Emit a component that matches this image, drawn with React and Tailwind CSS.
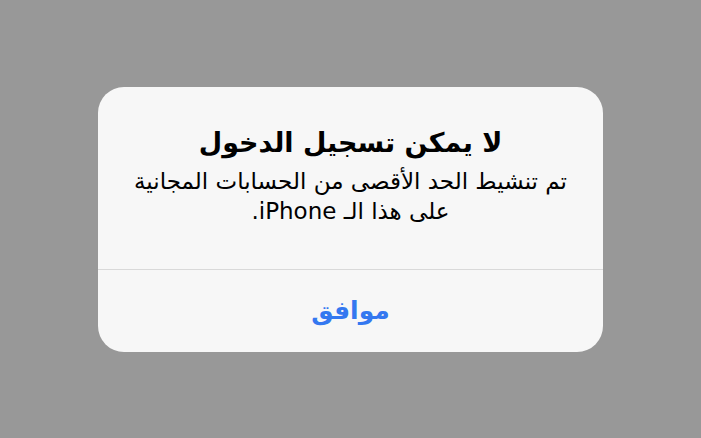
export default function App() {
    return (
        <div className="w-[701px] h-[438px] bg-[#989898] flex items-center justify-center" style={{ fontFamily: '"DejaVu Sans", "Noto Sans", sans-serif' }}>
            <div dir="rtl" className="w-[505px] h-[265px] bg-[#f7f7f7] rounded-[26px] flex flex-col overflow-hidden">
                {/* Message */}
                <div className="h-[182px] flex flex-col items-center pt-[37px] text-center text-black">
                    <div className="text-[27px] font-bold leading-[38px]">لا يمكن تسجيل الدخول</div>
                    <div className="text-[23px] leading-[30px] mt-[4px]">
                        تم تنشيط الحد الأقصى من الحسابات المجانية
                        <br />
                        على هذا الـ iPhone.
                    </div>
                </div>

                <div className="h-px bg-[#d9d9d9]" />

                {/* Button */}
                <button className="flex-1 flex items-center justify-center text-[25px] font-semibold text-[#3478f0]">
                    موافق
                </button>
            </div>
        </div>
    );
}
